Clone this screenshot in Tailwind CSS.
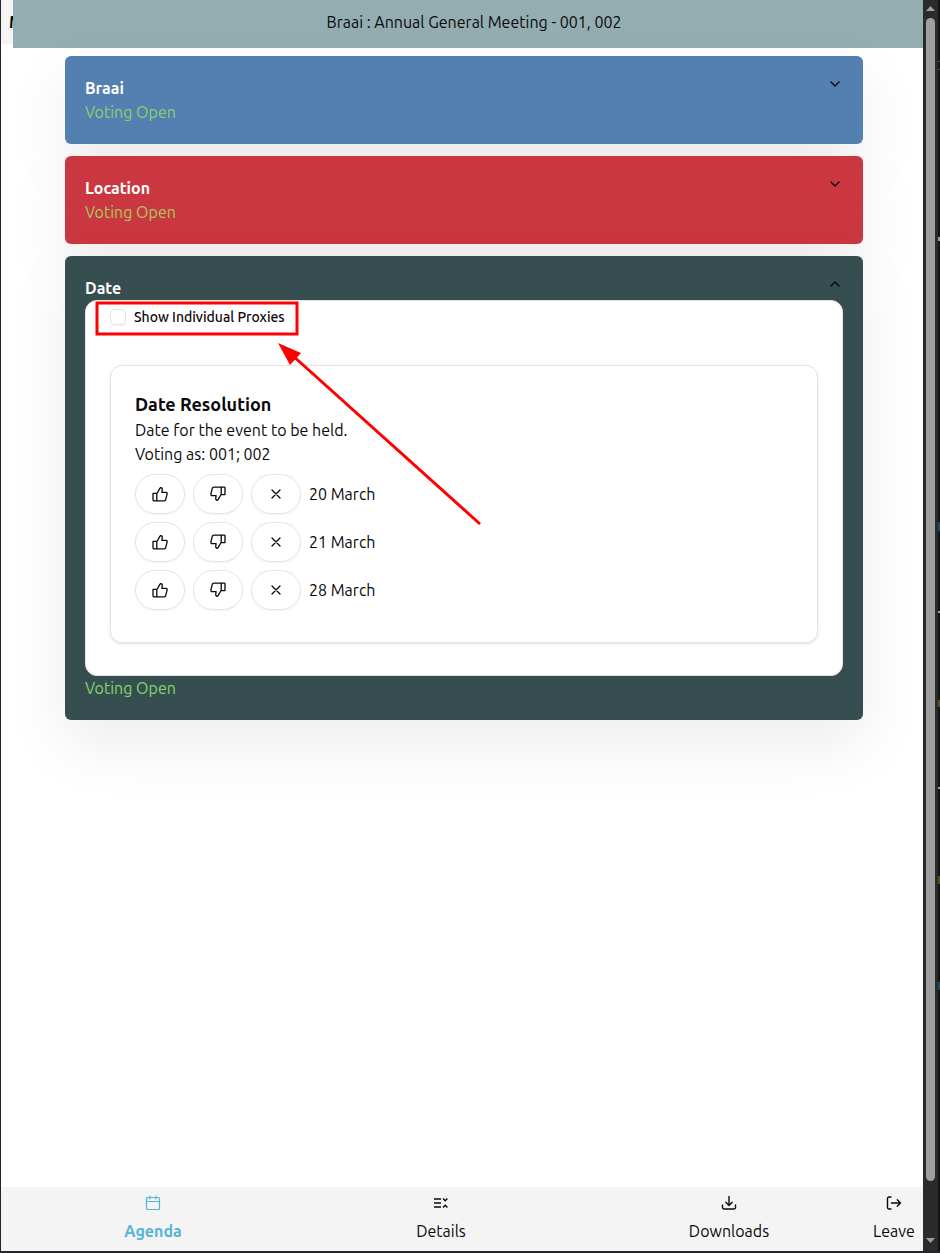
<!DOCTYPE html>
<html lang="en">
<head>
  <meta charset="UTF-8" />
  <meta name="viewport" content="width=device-width, initial-scale=1.0" />
  <title>Braai : Annual General Meeting</title>
  <script src="https://cdn.jsdelivr.net/npm/@tailwindcss/browser@4"></script>
</head>
<body class="flex h-screen overflow-hidden border-b-2 border-l border-[#25252f] bg-white font-[Ubuntu,'Noto_Sans',sans-serif] text-base text-[#09090b]">

  <!-- shared icons -->
  <svg class="hidden">
    <symbol id="up" viewBox="0 0 16 16"><path d="M1 7.4h3.8v7.4H1.8A.8.8 0 0 1 1 14zM4.8 7.8 7.9 2.4c.5-1.2 2.4-.8 2.4.8l-.4 3.1h3.9a1.3 1.3 0 0 1 1.3 1.6l-1.3 5.5a1.8 1.8 0 0 1-1.7 1.4H4.8" /></symbol>
    <symbol id="down" viewBox="0 0 16 16"><path transform="rotate(180 8 8)" d="M1 7.4h3.8v7.4H1.8A.8.8 0 0 1 1 14zM4.8 7.8 7.9 2.4c.5-1.2 2.4-.8 2.4.8l-.4 3.1h3.9a1.3 1.3 0 0 1 1.3 1.6l-1.3 5.5a1.8 1.8 0 0 1-1.7 1.4H4.8" /></symbol>
    <symbol id="cross" viewBox="0 0 16 16"><path d="m12 4-8 8M4 4l8 8" /></symbol>
  </svg>

  <div class="flex min-w-0 flex-1 flex-col">
    <div class="flex">
      <div class="h-11 w-3 overflow-hidden bg-[#f4f4f5] pt-[10px] pl-2 font-bold">M</div>
      <header class="h-12 flex-1 bg-[#94adb0] pt-[10px] pl-3 text-center">Braai : Annual General Meeting - 001, 002</header>
    </div>

    <main class="flex flex-1 flex-col gap-3 pt-2 pr-[60px] pl-16">
      <section class="rounded-md bg-[#537fb1] p-5 shadow-[0_24px_64px_rgba(0,0,0,0.08)]">
        <div class="flex justify-between">
          <h2 class="font-semibold text-white">Braai</h2>
          <button type="button" aria-label="Expand" class="size-4"><svg class="size-4 fill-none stroke-current stroke-2" viewBox="0 0 24 24" stroke-linecap="round" stroke-linejoin="round"><path d="m6 9 6 6 6-6" /></svg></button>
        </div>
        <p class="text-[#84d46f]">Voting Open</p>
      </section>

      <section class="rounded-md bg-[#cb3740] p-5 shadow-[0_24px_64px_rgba(0,0,0,0.08)]">
        <div class="flex justify-between">
          <h2 class="font-semibold text-white">Location</h2>
          <button type="button" aria-label="Expand" class="size-4"><svg class="size-4 fill-none stroke-current stroke-2" viewBox="0 0 24 24" stroke-linecap="round" stroke-linejoin="round"><path d="m6 9 6 6 6-6" /></svg></button>
        </div>
        <p class="text-[#a8c861]">Voting Open</p>
      </section>

      <section class="rounded-md bg-[#374e50] p-5 shadow-[0_24px_64px_rgba(0,0,0,0.08)]">
        <div class="flex justify-between">
          <h2 class="font-semibold text-white">Date</h2>
          <button type="button" aria-label="Collapse" class="size-4"><svg class="size-4 fill-none stroke-current stroke-2" viewBox="0 0 24 24" stroke-linecap="round" stroke-linejoin="round"><path d="m18 15-6-6-6 6" /></svg></button>
        </div>

        <div class="relative rounded-xl border border-[#e4e4e7] bg-white px-6 pb-8">
          <div class="mb-8 flex h-8 items-center gap-2">
            <input type="checkbox" id="proxies" class="size-4 appearance-none rounded-sm border border-[#e4e4e7] shadow-xs" />
            <label for="proxies" class="text-sm font-medium">Show Individual Proxies</label>
          </div>

          <div class="rounded-xl border border-[#e4e4e7] p-6 shadow-sm">
            <h3 class="text-lg leading-7 font-semibold">Date Resolution</h3>
            <p>Date for the event to be held.</p>
            <p>Voting as: 001; 002</p>
            <ul class="mt-2">
              <li class="mb-2 flex items-center gap-2">
                <button type="button" aria-label="For" class="flex h-10 w-[50px] items-center justify-center rounded-full border border-[#e4e4e7] shadow-xs"><svg class="size-4 fill-none stroke-current stroke-[1.3]" stroke-linecap="round" stroke-linejoin="round"><use href="#up" /></svg></button>
                <button type="button" aria-label="Against" class="flex h-10 w-[50px] items-center justify-center rounded-full border border-[#e4e4e7] shadow-xs"><svg class="size-4 fill-none stroke-current stroke-[1.3]" stroke-linecap="round" stroke-linejoin="round"><use href="#down" /></svg></button>
                <button type="button" aria-label="Abstain" class="flex h-10 w-[50px] items-center justify-center rounded-full border border-[#e4e4e7] shadow-xs"><svg class="size-4 fill-none stroke-current stroke-[1.3]" stroke-linecap="round" stroke-linejoin="round"><use href="#cross" /></svg></button>
                <span>20 March</span>
              </li>
              <li class="mb-2 flex items-center gap-2">
                <button type="button" aria-label="For" class="flex h-10 w-[50px] items-center justify-center rounded-full border border-[#e4e4e7] shadow-xs"><svg class="size-4 fill-none stroke-current stroke-[1.3]" stroke-linecap="round" stroke-linejoin="round"><use href="#up" /></svg></button>
                <button type="button" aria-label="Against" class="flex h-10 w-[50px] items-center justify-center rounded-full border border-[#e4e4e7] shadow-xs"><svg class="size-4 fill-none stroke-current stroke-[1.3]" stroke-linecap="round" stroke-linejoin="round"><use href="#down" /></svg></button>
                <button type="button" aria-label="Abstain" class="flex h-10 w-[50px] items-center justify-center rounded-full border border-[#e4e4e7] shadow-xs"><svg class="size-4 fill-none stroke-current stroke-[1.3]" stroke-linecap="round" stroke-linejoin="round"><use href="#cross" /></svg></button>
                <span>21 March</span>
              </li>
              <li class="mb-2 flex items-center gap-2">
                <button type="button" aria-label="For" class="flex h-10 w-[50px] items-center justify-center rounded-full border border-[#e4e4e7] shadow-xs"><svg class="size-4 fill-none stroke-current stroke-[1.3]" stroke-linecap="round" stroke-linejoin="round"><use href="#up" /></svg></button>
                <button type="button" aria-label="Against" class="flex h-10 w-[50px] items-center justify-center rounded-full border border-[#e4e4e7] shadow-xs"><svg class="size-4 fill-none stroke-current stroke-[1.3]" stroke-linecap="round" stroke-linejoin="round"><use href="#down" /></svg></button>
                <button type="button" aria-label="Abstain" class="flex h-10 w-[50px] items-center justify-center rounded-full border border-[#e4e4e7] shadow-xs"><svg class="size-4 fill-none stroke-current stroke-[1.3]" stroke-linecap="round" stroke-linejoin="round"><use href="#cross" /></svg></button>
                <span>28 March</span>
              </li>
            </ul>
          </div>

          <!-- red callout -->
          <svg class="pointer-events-none absolute top-0 left-0" width="400" height="230" fill="none" stroke="#ff0000" stroke-width="3">
            <rect x="11" y="2" width="200" height="31" />
            <path d="M394 223 206 54" />
            <path d="m192 42 23 10-11 12z" fill="#ff0000" stroke="none" />
          </svg>
        </div>
        <p class="text-[#84d46f]">Voting Open</p>
      </section>
    </main>

    <nav class="flex h-16 bg-[#f4f4f5] px-2 pt-2 text-center">
      <a href="#agenda" class="flex flex-1 flex-col items-center gap-2 font-semibold text-[#55b5d3]">
        <svg class="size-4 fill-none stroke-current" viewBox="0 0 16 16" stroke-width="1.2" stroke-linecap="round"><rect x="1.5" y="2.5" width="13" height="12" rx="1" /><path d="M1.5 6.5h13M5 1v3M11 1v3" /></svg>
        Agenda
      </a>
      <a href="#details" class="flex flex-1 flex-col items-center gap-2">
        <svg class="size-4 fill-none stroke-current" viewBox="0 0 16 16"><path d="M1 4h7M1 8h7M1 12h7" stroke-width="1.5" /><path d="m10 3.5 2.2 2.2 2.2-2.2M10 12.5l2.2-2.2 2.2 2.2" stroke-width="1.5" /></svg>
        Details
      </a>
      <a href="#downloads" class="flex flex-1 flex-col items-center gap-2">
        <svg class="size-4 fill-none stroke-current" viewBox="0 0 16 16" stroke-width="1.4" stroke-linecap="round" stroke-linejoin="round"><path d="M8 1.5v9M4.8 7.3 8 10.5l3.2-3.2M1.5 10v2.5a1.5 1.5 0 0 0 1.5 1.5h10a1.5 1.5 0 0 0 1.5-1.5V10" /></svg>
        Downloads
      </a>
      <a href="#leave" class="flex w-[42px] flex-col items-center gap-2">
        <svg class="size-4 fill-none stroke-current" viewBox="0 0 16 16" stroke-width="1.4" stroke-linecap="round" stroke-linejoin="round"><path d="M5 2H3a1.5 1.5 0 0 0-1.5 1.5v9A1.5 1.5 0 0 0 3 14h2M5.5 8h9M11.3 4.8 14.5 8l-3.2 3.2" /></svg>
        Leave
      </a>
    </nav>
  </div>

  <!-- window scrollbar -->
  <div class="flex w-[15px] flex-col items-center justify-between bg-[#2b2b2b] pt-[6px] pb-2">
    <svg width="9" height="5" fill="#9f9f9f"><path d="M4.5 0 9 5H0z" /></svg>
    <div class="mt-[7px] mb-[57px] w-[9px] flex-1 rounded-full bg-[#9f9f9f]"></div>
    <svg width="9" height="5" fill="#9f9f9f"><path d="M0 0h9L4.5 5z" /></svg>
  </div>

  <!-- edge of the editor window behind -->
  <div class="w-[2px] overflow-hidden bg-[#141414]">
    <svg width="2" height="1000">
      <path d="M1 61v1M1 69v1M1 700v7" stroke="#a58a63" />
      <path d="M1 237v4M1 611v2M1 787v2" stroke="#9a9a9a" stroke-width="2" />
      <path d="M1 522v9M1 982v8" stroke="#3f77a8" />
      <path d="M1 876v8" stroke="#8f8f50" />
    </svg>
  </div>
</body>
</html>
